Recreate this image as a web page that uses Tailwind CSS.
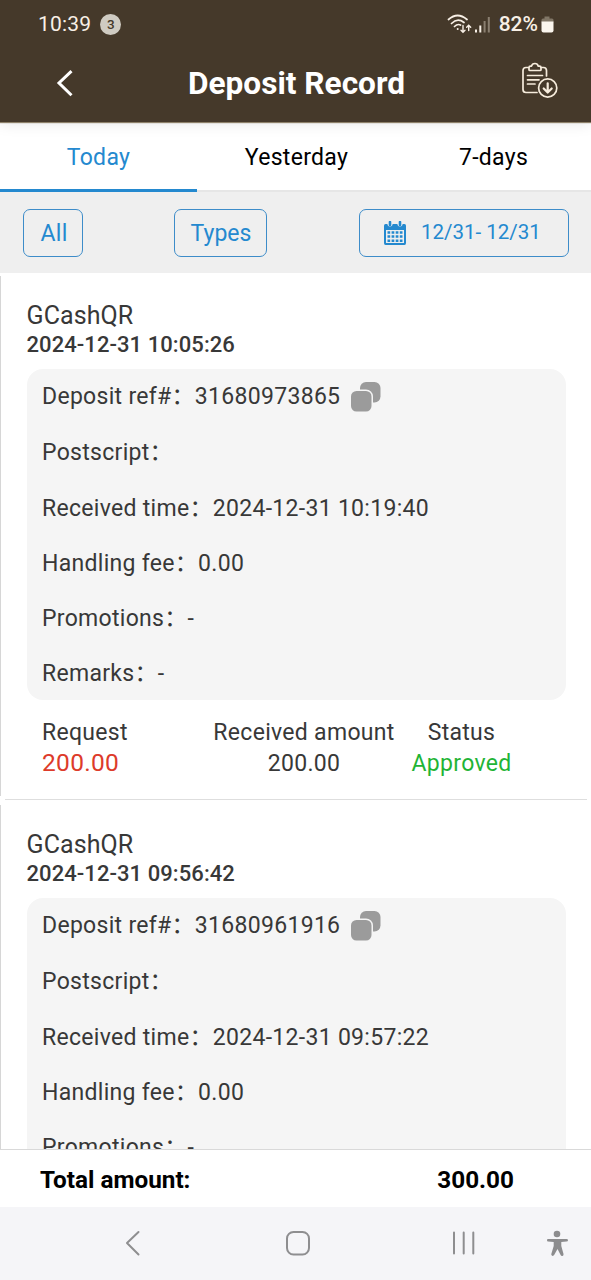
<!DOCTYPE html>
<html lang="en">
<head>
<meta charset="utf-8">
<title>Deposit Record</title>
<script src="https://cdn.jsdelivr.net/npm/@tailwindcss/browser@4"></script>
</head>
<body class="w-[591px] h-[1280px] overflow-hidden bg-white font-['Roboto','Noto_Sans_CJK_SC',sans-serif] text-[#383838]">
<div class="flex h-[1280px] flex-col overflow-hidden">
  <header class="relative z-10 h-[122px] shrink-0 bg-[#45392a] text-white shadow-[0_1px_1px_#8d8069,0_2px_14px_#00000018]">
    <div class="flex h-[48px] items-center pl-[38px] pr-[37px] text-[#f8f0e6]">
      <span class="pt-[2px] text-[21px] tracking-[0.2px]">10:39</span>
      <span class="ml-[9px] flex size-[21px] items-center justify-center rounded-full bg-[#cfcbc2] text-[13.500px] font-medium text-[#45392a]">3</span>
      <svg class="ml-auto" width="26" height="22" viewBox="0 0 26 22" fill="none" stroke="#f8f0e6" stroke-width="1.7" stroke-linecap="round">
        <path d="M1.5 6.500Q10.500 -1.500 20 6.500M4.500 10.500Q10.500 4.500 17 9.500M7.500 13.500Q10.500 10.500 13.500 12"/>
        <circle cx="10.700" cy="16" r="1" fill="#f8f0e6" stroke="none"/>
        <path d="M16 12.500V19M14 17.300L16 19.300L18 17.300M21.700 17.500V12.500M19.700 14.200L21.700 12.200L23.700 14.200" stroke-width="1.400"/>
      </svg>
      <svg class="ml-[2px]" width="16" height="18" viewBox="0 0 16 18">
        <path d="M0 14.500h2v3H0zM4.300 10.500h2v7h-2z" fill="#f8f0e6"/><path d="M8.600 6h2v11.500h-2zM12.800 2h2v15.500h-2z" fill="#8a7f70"/>
      </svg>
      <span class="ml-[8px] pt-[2px] text-[21px] font-medium">82%</span>
      <svg class="ml-[3px]" width="13" height="18" viewBox="0 0 13 18">
        <path d="M3.500 1.500h5v2h2.500q1.500 0 1.500 1.500v2.500h-12V5q0-1.500 1.500-1.500h1.500z" fill="#807666"/><path d="M.5 6.500h12v9q0 2-2 2h-8q-2 0-2-2z" fill="#fbf6ee"/>
      </svg>
    </div>
    <div class="flex h-[70px] items-center pl-[56px] pr-[33px]">
      <svg width="18" height="28" viewBox="0 0 18 28" fill="none" stroke="#fff" stroke-width="3"><path d="M15.500 2.200L3 14L15.500 26.300"/></svg>
      <h1 class="ml-[114px] pt-px text-[31.600px] font-bold leading-none whitespace-nowrap">Deposit Record</h1>
      <svg class="-mt-[7px] ml-auto" width="37" height="36" viewBox="0 0 37 36" fill="none" stroke="#f6ecdc" stroke-width="1.700" stroke-linecap="round" stroke-linejoin="round">
        <path d="M7.500 5.500H5Q2 5.500 2 8.500V27.500Q2 30.500 5 30.500H16M20 5.500H22.500Q25.500 5.500 25.500 8.500V14"/>
        <path d="M8 7.800V5.500Q8 4.200 9.500 4.200H10.500Q11 1.500 14 1.500Q16.500 1.500 17.300 4.200H18.500Q20 4.200 20 5.500V7.800Q20 8.500 19 8.500H9Q8 8.500 8 7.800Z"/>
        <path d="M6.500 13.500H21.500M6.500 17.800H18M6.500 22H14"/>
        <circle cx="26.700" cy="26" r="9.100"/><path d="M26.700 21.300V30.300M22.700 26.500L26.700 30.500L30.700 26.500" stroke-width="2.200"/>
      </svg>
    </div>
  </header>

  <nav class="grid h-[70px] shrink-0 grid-cols-3 border-b-2 border-[#e6e6e6] text-center text-[23px] leading-[71px] tracking-[0.3px] text-black">
    <span class="h-[70px] border-b-3 border-[#2489cf] text-[#2489cf]">Today</span><span class="pl-[2px]">Yesterday</span><span class="pl-[2px]">7-days</span>
  </nav>

  <div class="flex h-[81px] shrink-0 items-center bg-[#efefef] pl-[23px] pr-[22px] text-[23px] tracking-[0.3px] text-[#2489cf]">
    <span class="flex h-[48px] w-[60px] items-center justify-center rounded-[7px] border border-[#3d8cc9] pl-[2px] pt-[4px]">All</span>
    <span class="ml-[91px] flex h-[48px] w-[93px] items-center justify-center rounded-[7px] border border-[#3d8cc9] pl-px pt-[4px] tracking-[0px]">Types</span>
    <span class="ml-auto flex h-[48px] w-[210px] items-center rounded-[7px] border border-[#3d8cc9] pl-[24px] text-[20.5px]">
      <svg width="22" height="24" viewBox="0 0 22 24">
        <path d="M1.500 3H20.500Q22 3 22 4.500V22Q22 24 20.500 24H1.500Q0 24 0 22V4.500Q0 3 1.500 3Z" fill="#2489cf"/>
        <path d="M2 9H20V22H2Z" fill="#efefef"/>
        <path d="M3.500 0.500h5v3.500q-2.500 3-5 0zM13.500 0.500h5v3.500q-2.500 3-5 0z" fill="#efefef"/>
        <path d="M6 1V4M16 1V4" stroke="#2489cf" stroke-width="2.600" stroke-linecap="round"/>
        <path d="M3.500 11.500H19M3.500 15.600H19M3.500 19.700H19" stroke="#2489cf" stroke-width="2.500" stroke-dasharray="2.700 1.400"/>
      </svg>
      <span class="ml-[15px] whitespace-nowrap tracking-[0px]">12/31- 12/31</span>
    </span>
  </div>

  <main class="h-[876px] shrink-0 overflow-hidden text-[23px] tracking-[0.3px]">
    <section class="relative h-[529px] pl-[26.500px] pr-[25px] pt-[27px]">
      <i class="absolute bottom-[6px] left-0 top-[3px] w-px bg-[#d6d6d6]"></i><i class="absolute bottom-[2px] left-[5px] right-[4px] h-[1.500px] bg-[#dedede]"></i>
      <h2 class="-mb-[2px] text-[25px] leading-[32px] tracking-[0.1px]">GCashQR</h2>
      <p class="text-[22px] font-medium leading-[29px] tracking-[0.07px]">2024-12-31 10:05:26</p>
      <div class="mt-[10px] h-[331px] rounded-[16px] bg-[#f5f5f5] pl-[15.500px] leading-[57px]">
        <div class="flex h-[55.300px] items-center">Deposit ref#：31680973865
          <svg class="ml-[11px]" width="30" height="30" viewBox="0 0 30 30" fill="#9b9b9b"><rect x="9" y="0" width="20.500" height="20.500" rx="6"/><rect x="-1" y="7.500" width="23" height="24" rx="7" fill="#f5f5f5"/><rect x="0" y="9" width="20.500" height="20.500" rx="5.500"/></svg>
        </div>
        <div class="h-[55.300px]">Postscript：</div>
        <div class="h-[55.300px]">Received time：2024-12-31 10:19:40</div>
        <div class="h-[55.300px]">Handling fee：0.00</div>
        <div class="h-[55.300px]">Promotions：-</div>
        <div class="h-[55.300px]">Remarks：-</div>
      </div>
      <div class="mt-[17px] flex pl-[15.500px] leading-[31px]">
        <div class="w-[170.500px]">Request<div class="text-[24.500px] leading-[29px] text-[#dd3b2a]">200.00</div></div>
        <div class="w-[183px] text-center">Received amount<div>200.00</div></div>
        <div class="ml-[15px] w-[102px] text-center">Status<div class="text-[#1fb436]">Approved</div></div>
      </div>
    </section>
    <section class="relative h-[529px] pl-[26.500px] pr-[25px] pt-[27px]">
      <i class="absolute bottom-[6px] left-0 top-[3px] w-px bg-[#d6d6d6]"></i>
      <h2 class="-mb-[2px] text-[25px] leading-[32px] tracking-[0.1px]">GCashQR</h2>
      <p class="text-[22px] font-medium leading-[29px] tracking-[0.07px]">2024-12-31 09:56:42</p>
      <div class="mt-[10px] h-[331px] rounded-[16px] bg-[#f5f5f5] pl-[15.500px] leading-[57px]">
        <div class="flex h-[55.300px] items-center">Deposit ref#：31680961916
          <svg class="ml-[11px]" width="30" height="30" viewBox="0 0 30 30" fill="#9b9b9b"><rect x="9" y="0" width="20.500" height="20.500" rx="6"/><rect x="-1" y="7.500" width="23" height="24" rx="7" fill="#f5f5f5"/><rect x="0" y="9" width="20.500" height="20.500" rx="5.500"/></svg>
        </div>
        <div class="h-[55.300px]">Postscript：</div>
        <div class="h-[55.300px]">Received time：2024-12-31 09:57:22</div>
        <div class="h-[55.300px]">Handling fee：0.00</div>
        <div class="h-[55.300px]">Promotions：-</div>
      </div>
    </section>
  </main>

  <div class="flex h-[58px] shrink-0 items-center border-t border-[#d9d9d9] bg-white pl-[40px] pr-[77px] pt-[3px] text-[24.300px] font-bold text-black">
    <span>Total amount:</span><span class="ml-auto">300.00</span>
  </div>
  <footer class="flex h-[73px] shrink-0 items-center bg-[#f5f5f8]">
    <svg width="591" height="73" viewBox="0 0 591 73" fill="none" stroke="#8e8e90" stroke-width="2" stroke-linecap="round" stroke-linejoin="round">
      <path d="M138.500 25L127 36L138.500 47.500"/><rect x="287" y="25" width="22" height="22.500" rx="6.500"/><path d="M454 25.500V46.500M463.700 25.500V46.500M473.300 25.500V46.500"/>
      <g fill="#8c8c8e" stroke="none"><circle cx="557" cy="27" r="3.300"/><path d="M548 32H566.500Q568 32 568 33.200Q568 34.400 566.500 34.600L561.300 35V39L563.500 47Q563.800 48.700 562.500 49Q561 49.200 560.500 47.800L557.500 42L554.300 47.800Q553.500 49.200 552.200 48.800Q551 48.300 551.300 47L553.700 39V35L548 34.600Q547 34.400 547 33.200Q547 32 548 32Z"/></g>
    </svg>
  </footer>
</div>
</body>
</html>
